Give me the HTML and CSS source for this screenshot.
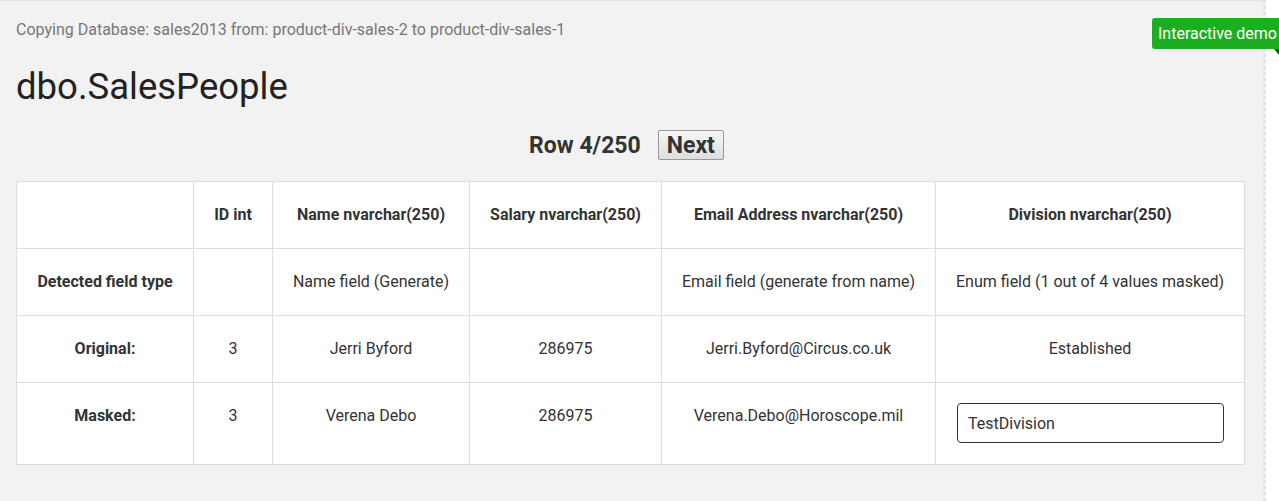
FILE: index.html
```html
<!DOCTYPE html>
<html lang="en">
<head>
    <meta charset="UTF-8">
    <title>dbo.SalesPeople</title>
    <link rel="stylesheet" href="styles.css">
</head>
<body>

    <div class="frame">
        <p class="copying">Copying Database: sales2013 from: product-div-sales-2 to product-div-sales-1</p>
        <h1 class="tname">dbo.SalesPeople</h1>

        <div class="pager">
            <span class="rowno">Row 4/250</span>
            <button class="nextbtn">Next</button>
        </div>

        <table class="masktable">
            <colgroup>
                <col style="width: 177px">
                <col style="width: 79px">
                <col style="width: 197px">
                <col style="width: 192px">
                <col style="width: 274px">
                <col style="width: 309px">
            </colgroup>
            <thead>
                <tr>
                    <th></th>
                    <th>ID int</th>
                    <th>Name nvarchar(250)</th>
                    <th>Salary nvarchar(250)</th>
                    <th>Email Address nvarchar(250)</th>
                    <th>Division nvarchar(250)</th>
                </tr>
            </thead>
            <tbody>
                <tr>
                    <th>Detected field type</th>
                    <td></td>
                    <td>Name field (Generate)</td>
                    <td></td>
                    <td>Email field (generate from name)</td>
                    <td>Enum field (1 out of 4 values masked)</td>
                </tr>
                <tr>
                    <th>Original:</th>
                    <td>3</td>
                    <td>Jerri Byford</td>
                    <td>286975</td>
                    <td>Jerri.Byford@Circus.co.uk</td>
                    <td>Established</td>
                </tr>
                <tr>
                    <th>Masked:</th>
                    <td>3</td>
                    <td>Verena Debo</td>
                    <td>286975</td>
                    <td>Verena.Debo@Horoscope.mil</td>
                    <td><input class="maskinput" type="text" value="TestDivision"></td>
                </tr>
            </tbody>
        </table>
    </div>

    <div class="demo">Interactive demo</div>

</body>
</html>
```

FILE: styles.css
```css
html, body {
    margin: 0;
    padding: 0;
    background-color: #fff;
    font-family: Roboto, "Liberation Sans", sans-serif;
}
.frame {
    width: 1231px;
    height: 500px;
    padding: 0 16px;
    background-color: #f2f2f2;
    border-top: 1px solid #e6e6e6;
    border-right: 3px dotted #e2e2e2;
    overflow: hidden;
}
.copying {
    margin: 19px 0 0;
    font-size: 16px;
    line-height: 20px;
    color: #777;
}
.tname {
    margin: 26px 0 0;
    font-size: 36.5px;
    font-weight: normal;
    line-height: 42px;
    color: #222;
}
.pager {
    display: flex;
    justify-content: center;
    align-items: center;
    gap: 17px;
    margin-top: 22px;
    padding-right: 10px;
    height: 30px;
}
.rowno {
    font-size: 23px;
    font-weight: bold;
    color: #333;
}
.nextbtn {
    height: 30px;
    padding: 0 8px;
    font-family: Roboto, "Liberation Sans", sans-serif;
    font-size: 23px;
    font-weight: bold;
    color: #333;
    background: linear-gradient(#f6f6f6, #dedede);
    border: 1px solid #999;
    border-radius: 2px;
}
.masktable {
    width: 1228px;
    margin-top: 21px;
    table-layout: fixed;
    border-collapse: collapse;
    background-color: #fff;
}
.masktable th, .masktable td {
    border: 1px solid #ddd;
    padding: 20px 8px;
    height: 26px;
    font-size: 16px;
    line-height: 26px;
    text-align: center;
    vertical-align: top;
    white-space: nowrap;
    color: #333;
}
.masktable th {
    font-weight: bold;
}
.maskinput {
    box-sizing: border-box;
    display: block;
    width: 267px;
    height: 40px;
    margin: 0 0 1px 13px;
    padding: 0 10px;
    font-family: Roboto, "Liberation Sans", sans-serif;
    font-size: 16px;
    color: #333;
    border: 1px solid #333;
    border-radius: 4px;
    background-color: #fff;
}
.demo {
    position: absolute;
    top: 18px;
    left: 1152px;
    width: 127px;
    height: 31px;
    padding-left: 6px;
    box-sizing: border-box;
    background-color: #1dad21;
    color: #fff;
    font-size: 16px;
    line-height: 31px;
    border-radius: 3px 0 0 3px;
    white-space: nowrap;
}
.demo::after {
    content: "";
    position: absolute;
    right: 0;
    bottom: -6px;
    border-left: 5px solid transparent;
    border-top: 6px solid #0f5c12;
}
```
